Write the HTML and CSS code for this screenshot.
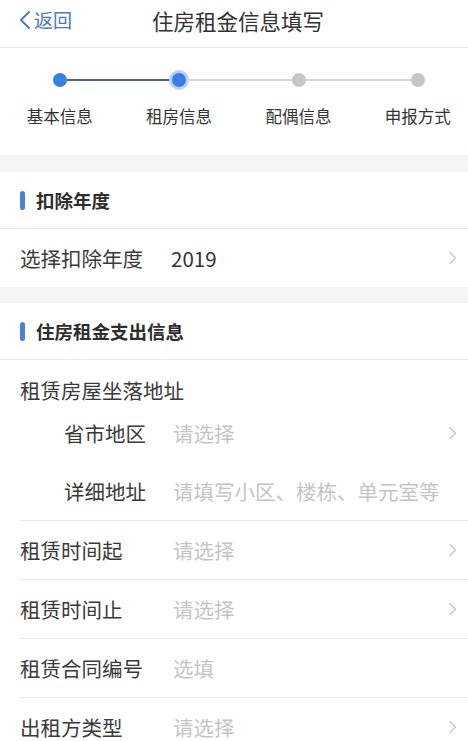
FILE: index.html
```html
<!DOCTYPE html>
<html lang="zh-CN">
<head>
<meta charset="utf-8">
<title>住房租金信息填写</title>
<link rel="stylesheet" href="styles.css">
</head>
<body>
<header class="nav">
  <div class="back">
    <svg class="back-icon" width="12" height="20" viewBox="0 0 12 20"><polyline points="10,2 2,10 10,18" fill="none" stroke="#4a78c4" stroke-width="1.8" stroke-linecap="round" stroke-linejoin="round"/></svg>
    <span>返回</span>
  </div>
  <div class="title">住房租金信息填写</div>
  <div></div>
</header>

<section class="steps">
  <div class="dots">
    <span class="dot done"></span>
    <span class="seg seg-done"></span>
    <span class="dot active"></span>
    <span class="seg"></span>
    <span class="dot"></span>
    <span class="seg"></span>
    <span class="dot"></span>
  </div>
  <div class="labels">
    <span>基本信息</span>
    <span>租房信息</span>
    <span>配偶信息</span>
    <span>申报方式</span>
  </div>
</section>

<section class="card">
  <div class="card-head"><span class="bar"></span><span>扣除年度</span></div>
  <div class="row">
    <span class="label">选择扣除年度</span>
    <span class="value">2019</span>
    <svg class="chev" width="9" height="14" viewBox="0 0 9 14"><polyline points="2,1.5 7.5,7 2,12.5" fill="none" stroke="#c8c8cc" stroke-width="1.4" stroke-linecap="round" stroke-linejoin="round"/></svg>
  </div>
</section>

<section class="card card-second">
  <div class="card-head"><span class="bar"></span><span>住房租金支出信息</span></div>
  <div class="addr">
    <div class="addr-title">租赁房屋坐落地址</div>
    <div class="sub-row">
      <span class="sub-label">省市地区</span>
      <span class="placeholder">请选择</span>
      <svg class="chev" width="9" height="14" viewBox="0 0 9 14"><polyline points="2,1.5 7.5,7 2,12.5" fill="none" stroke="#c8c8cc" stroke-width="1.4" stroke-linecap="round" stroke-linejoin="round"/></svg>
    </div>
    <div class="sub-row">
      <span class="sub-label">详细地址</span>
      <span class="placeholder">请填写小区、楼栋、单元室等</span>
    </div>
  </div>
  <div class="row inset">
    <span class="label wide">租赁时间起</span>
    <span class="placeholder">请选择</span>
    <svg class="chev" width="9" height="14" viewBox="0 0 9 14"><polyline points="2,1.5 7.5,7 2,12.5" fill="none" stroke="#c8c8cc" stroke-width="1.4" stroke-linecap="round" stroke-linejoin="round"/></svg>
  </div>
  <div class="row inset">
    <span class="label wide">租赁时间止</span>
    <span class="placeholder">请选择</span>
    <svg class="chev" width="9" height="14" viewBox="0 0 9 14"><polyline points="2,1.5 7.5,7 2,12.5" fill="none" stroke="#c8c8cc" stroke-width="1.4" stroke-linecap="round" stroke-linejoin="round"/></svg>
  </div>
  <div class="row inset">
    <span class="label wide">租赁合同编号</span>
    <span class="placeholder">选填</span>
  </div>
  <div class="row inset">
    <span class="label wide">出租方类型</span>
    <span class="placeholder">请选择</span>
    <svg class="chev" width="9" height="14" viewBox="0 0 9 14"><polyline points="2,1.5 7.5,7 2,12.5" fill="none" stroke="#c8c8cc" stroke-width="1.4" stroke-linecap="round" stroke-linejoin="round"/></svg>
  </div>
</section>
</body>
</html>
```

FILE: styles.css
```css
* { box-sizing: border-box; }
html, body {
  margin: 0;
  padding: 0;
}
body {
  width: 468px;
  background: #f4f5f7;
  font-family: "Noto Sans CJK SC", "Noto Sans", sans-serif;
  color: #333;
  overflow: hidden;
}

.nav {
  height: 48px;
  background: #fff;
  border-bottom: 1px solid #e4e4e6;
  display: grid;
  grid-template-columns: 1fr auto 1fr;
  align-items: center;
}
.back {
  display: flex;
  align-items: center;
  padding-left: 19px;
  color: #4a78c4;
  font-size: 19px;
  line-height: 26px;
  gap: 3px;
  margin-top: -8px;
}
.title {
  font-size: 21.5px;
  line-height: 30px;
  color: #333;
  padding-left: 8px;
  margin-top: -6px;
}

.steps {
  background: #fff;
  height: 107px;
  padding-top: 25px;
}
.dots {
  display: flex;
  align-items: center;
  padding-left: 53px;
  height: 14px;
}
.dot {
  width: 14px;
  height: 14px;
  border-radius: 50%;
  background: #c5c6cc;
  flex: none;
}
.dot.done, .dot.active { background: #3a7ee4; }
.dot.active { box-shadow: 0 0 0 3px #b7d0f3; }
.seg {
  width: 105.3px;
  height: 2px;
  background: #d5d5da;
  flex: none;
}
.seg-done { background: #4f6886; }
.labels {
  display: grid;
  grid-template-columns: repeat(4, 119.4px);
  margin-top: 17px;
  font-size: 16.5px;
  line-height: 24px;
  color: #333;
  text-align: center;
}

.card {
  background: #fff;
  margin-top: 17px;
}
.card-second { margin-top: 16px; }
.card-head {
  height: 57px;
  border-bottom: 1px solid #ebebed;
  display: flex;
  align-items: center;
  padding-left: 20px;
  gap: 11px;
  font-size: 18.5px;
  font-weight: 700;
  color: #2e2e2e;
}
.bar {
  width: 5px;
  height: 19px;
  border-radius: 3px;
  background: #4a7fdb;
}

.row {
  height: 58px;
  display: flex;
  align-items: center;
  padding: 0 11px 0 20px;
  font-size: 20.5px;
  line-height: 28px;
}
.row.inset {
  margin-left: 20px;
  padding-left: 0;
  border-top: 1px solid #ececee;
  height: 59px;
}
.label {
  width: 151px;
  flex: none;
  color: #3a3a3a;
}
.label.wide { width: 153px; }
.value {
  flex: 1;
  color: #333;
}
.placeholder {
  flex: 1;
  color: #c4c4c6;
}
.chev { flex: none; }

.addr {
  height: 160px;
  padding-top: 16px;
  font-size: 20.5px;
  line-height: 28px;
}
.addr-title {
  padding-left: 20px;
  color: #3a3a3a;
}
.sub-row {
  height: 58px;
  display: flex;
  align-items: center;
  padding: 0 11px 0 64px;
}
.sub-row + .sub-row { height: 58px; }
.sub-label {
  width: 109px;
  flex: none;
  color: #3a3a3a;
}
```
